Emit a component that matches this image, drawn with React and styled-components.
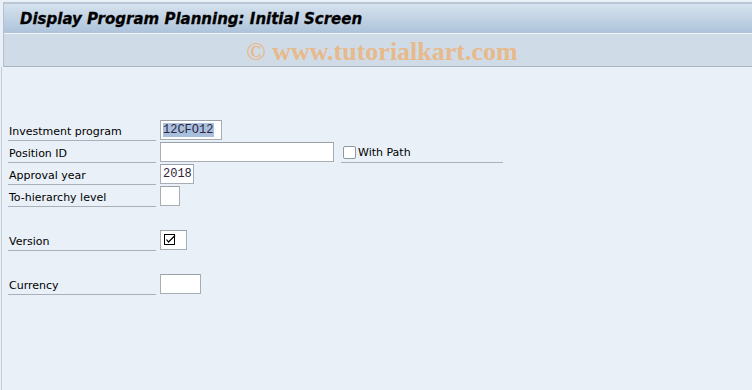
import React from "react";
import styled, { createGlobalStyle } from "styled-components";

const Global = createGlobalStyle`
  html, body { margin: 0; padding: 0; background: #e9f0f7; }
  * { box-sizing: border-box; }
`;

const Page = styled.div`
  width: 752px;
  height: 390px;
  display: flex;
  flex-direction: column;
  background: #e9f0f7;
  overflow: hidden;
`;

const Header = styled.div`
  margin-top: 2px;
  margin-left: 3px;
  border-top: 2px solid #b9c6d4;
  border-left: 1px solid #b4c0cd;
  display: flex;
  flex-direction: column;
`;

const TitleBar = styled.div`
  height: 30px;
  background: linear-gradient(#d6e2ee, #adc3da);
  border-bottom: 1px solid #f2f6fa;
  display: flex;
  align-items: center;
  padding-left: 16px;
`;

const Title = styled.h1`
  margin: 0;
  font-family: "DejaVu Sans", Verdana, sans-serif;
  font-style: italic;
  font-weight: bold;
  font-size: 15px;
  color: #000;
  -webkit-text-stroke: 0.3px #000;
`;

const Toolbar = styled.div`
  height: 33px;
  background: #cfdce8;
  border-bottom: 1px solid #a6b4c3;
  display: flex;
  align-items: center;
  justify-content: center;
`;

const Watermark = styled.span`
  font-family: "Liberation Serif", "Times New Roman", serif;
  font-weight: bold;
  font-size: 26px;
  color: #e8b98a;
  margin-top: 3px;
  margin-left: 8px;
`;

const Content = styled.div`
  flex: 1;
  border-left: 1px solid #c4ccd6;
  margin-left: 1px;
  padding: 53px 0 0 6px;
  display: flex;
  flex-direction: column;
`;

const Row = styled.div`
  height: 22px;
  display: flex;
  align-items: flex-start;
  margin-top: ${(p) => p.$gap || 0}px;
`;

const Label = styled.div`
  width: 148px;
  height: 21px;
  border-bottom: 1px solid #a9b0b8;
  font-family: "DejaVu Sans", Tahoma, sans-serif;
  font-size: 11px;
  color: #000;
  padding: 5px 0 0 1px;
  line-height: 13px;
  white-space: nowrap;
`;

const Field = styled.div`
  margin-left: 4px;
  width: ${(p) => p.$w}px;
  height: 20px;
  background: #fff;
  border: 1px solid #a7adb5;
  border-top-color: #9aa1a9;
  font-family: "Liberation Mono", "Courier New", monospace;
  font-size: 12px;
  color: #2e2440;
  display: flex;
  align-items: center;
  padding-left: 2px;
`;

const Selected = styled.span`
  background: #a8c0dc;
  line-height: 14px;
  padding: 0 1px 0 0;
`;

const CheckGroup = styled.div`
  margin-left: 7px;
  width: 162px;
  height: 21px;
  border-bottom: 1px solid #a9b0b8;
  display: flex;
  align-items: center;
  padding: 0 0 0 2px;
`;

const CheckBox = styled.span`
  width: 13px;
  height: 13px;
  border: 1px solid #8f979f;
  border-radius: 2px;
  background: #fff;
  margin-right: 2px;
`;

const CheckLabel = styled.span`
  font-family: "DejaVu Sans", Tahoma, sans-serif;
  font-size: 11px;
  color: #000;
`;

const CheckField = styled(Field)`
  padding-left: 3px;
`;

export default function App() {
  return (
    <>
      <Global />
      <Page>
        <Header>
          <TitleBar>
            <Title>Display Program Planning: Initial Screen</Title>
          </TitleBar>
          <Toolbar>
            <Watermark>© www.tutorialkart.com</Watermark>
          </Toolbar>
        </Header>
        <Content>
          <Row>
            <Label>Investment program</Label>
            <Field $w={62}>
              <Selected>12CFO12</Selected>
            </Field>
          </Row>
          <Row>
            <Label>Position ID</Label>
            <Field $w={174} />
            <CheckGroup>
              <CheckBox />
              <CheckLabel>With Path</CheckLabel>
            </CheckGroup>
          </Row>
          <Row>
            <Label>Approval year</Label>
            <Field $w={34}>2018</Field>
          </Row>
          <Row>
            <Label>To-hierarchy level</Label>
            <Field $w={20} />
          </Row>
          <Row $gap={22}>
            <Label>Version</Label>
            <CheckField $w={27}>
              <svg width="12" height="12" viewBox="0 0 12 12">
                <rect x="0.5" y="0.5" width="10" height="10" fill="none" stroke="#000" strokeWidth="1" />
                <path d="M2.5 5.5 L4.5 8 L11 1.5" fill="none" stroke="#000" strokeWidth="1.2" />
              </svg>
            </CheckField>
          </Row>
          <Row $gap={22}>
            <Label>Currency</Label>
            <Field $w={41} />
          </Row>
        </Content>
      </Page>
    </>
  );
}
